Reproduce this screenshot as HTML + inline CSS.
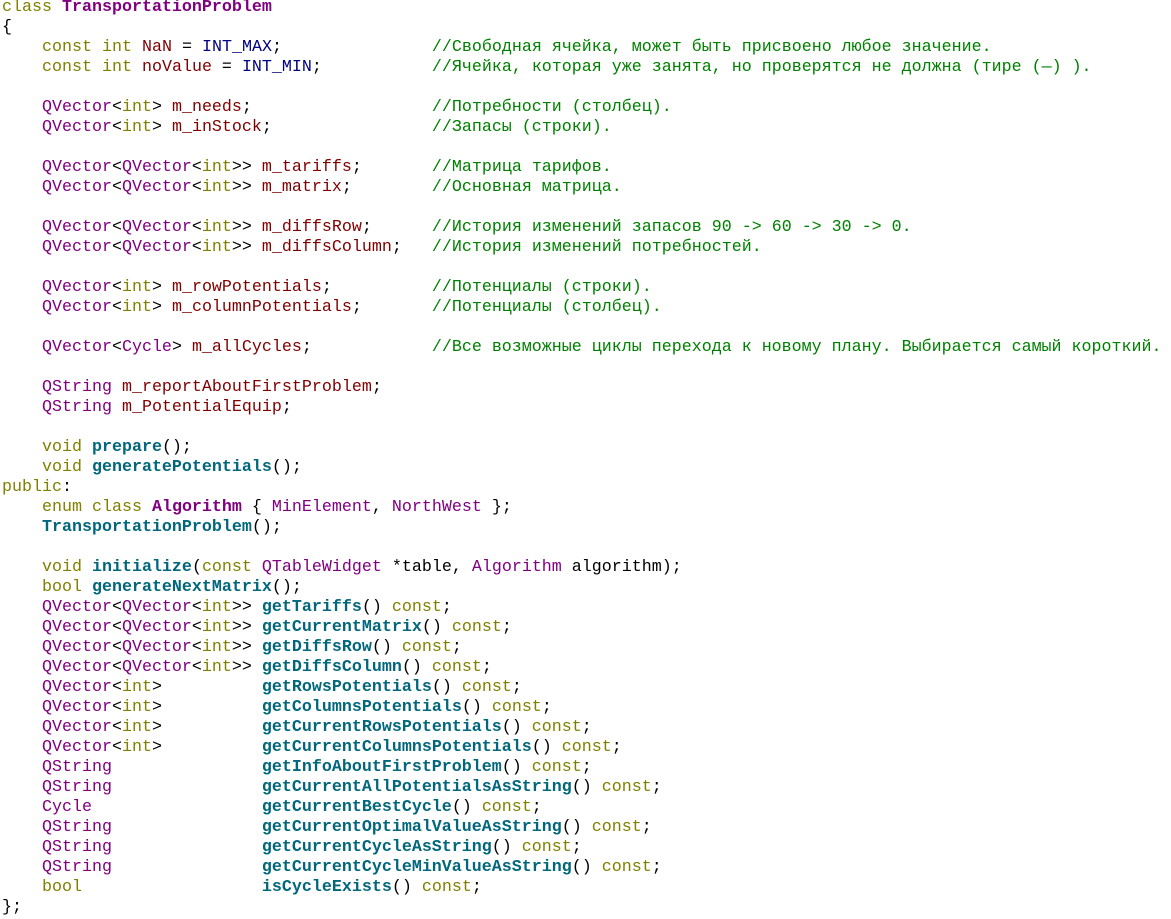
<!DOCTYPE html><html><head><meta charset="utf-8"><style>
body{margin:0;background:#fff;width:1171px;height:919px;overflow:hidden}
pre{margin:0;position:absolute;top:-2px;left:2px;font-family:"Liberation Mono","DejaVu Sans Mono",monospace;font-size:16.67px;line-height:20px;color:#000}
.k{color:#808000}.t{color:#800080}.m{color:#800000}.e{color:#000080}.f{color:#00677c;font-weight:bold}.c{color:#008000}.b{color:#800080;font-weight:bold}
</style></head><body><pre><span class="k">class</span> <span class="b">TransportationProblem</span>
{
    <span class="k">const</span> <span class="k">int</span> <span class="m">NaN</span> = <span class="e">INT_MAX</span>;               <span class="c">//Свободная ячейка, может быть присвоено любое значение.</span>
    <span class="k">const</span> <span class="k">int</span> <span class="m">noValue</span> = <span class="e">INT_MIN</span>;           <span class="c">//Ячейка, которая уже занята, но проверятся не должна (тире (—) ).</span>

    <span class="t">QVector</span>&lt;<span class="k">int</span>&gt; <span class="m">m_needs</span>;                  <span class="c">//Потребности (столбец).</span>
    <span class="t">QVector</span>&lt;<span class="k">int</span>&gt; <span class="m">m_inStock</span>;                <span class="c">//Запасы (строки).</span>

    <span class="t">QVector</span>&lt;<span class="t">QVector</span>&lt;<span class="k">int</span>&gt;&gt; <span class="m">m_tariffs</span>;       <span class="c">//Матрица тарифов.</span>
    <span class="t">QVector</span>&lt;<span class="t">QVector</span>&lt;<span class="k">int</span>&gt;&gt; <span class="m">m_matrix</span>;        <span class="c">//Основная матрица.</span>

    <span class="t">QVector</span>&lt;<span class="t">QVector</span>&lt;<span class="k">int</span>&gt;&gt; <span class="m">m_diffsRow</span>;      <span class="c">//История изменений запасов 90 -&gt; 60 -&gt; 30 -&gt; 0.</span>
    <span class="t">QVector</span>&lt;<span class="t">QVector</span>&lt;<span class="k">int</span>&gt;&gt; <span class="m">m_diffsColumn</span>;   <span class="c">//История изменений потребностей.</span>

    <span class="t">QVector</span>&lt;<span class="k">int</span>&gt; <span class="m">m_rowPotentials</span>;          <span class="c">//Потенциалы (строки).</span>
    <span class="t">QVector</span>&lt;<span class="k">int</span>&gt; <span class="m">m_columnPotentials</span>;       <span class="c">//Потенциалы (столбец).</span>

    <span class="t">QVector</span>&lt;<span class="t">Cycle</span>&gt; <span class="m">m_allCycles</span>;            <span class="c">//Все возможные циклы перехода к новому плану. Выбирается самый короткий.</span>

    <span class="t">QString</span> <span class="m">m_reportAboutFirstProblem</span>;
    <span class="t">QString</span> <span class="m">m_PotentialEquip</span>;

    <span class="k">void</span> <span class="f">prepare</span>();
    <span class="k">void</span> <span class="f">generatePotentials</span>();
<span class="k">public</span>:
    <span class="k">enum</span> <span class="k">class</span> <span class="b">Algorithm</span> { <span class="t">MinElement</span>, <span class="t">NorthWest</span> };
    <span class="f">TransportationProblem</span>();

    <span class="k">void</span> <span class="f">initialize</span>(<span class="k">const</span> <span class="t">QTableWidget</span> *table, <span class="t">Algorithm</span> algorithm);
    <span class="k">bool</span> <span class="f">generateNextMatrix</span>();
    <span class="t">QVector</span>&lt;<span class="t">QVector</span>&lt;<span class="k">int</span>&gt;&gt; <span class="f">getTariffs</span>() <span class="k">const</span>;
    <span class="t">QVector</span>&lt;<span class="t">QVector</span>&lt;<span class="k">int</span>&gt;&gt; <span class="f">getCurrentMatrix</span>() <span class="k">const</span>;
    <span class="t">QVector</span>&lt;<span class="t">QVector</span>&lt;<span class="k">int</span>&gt;&gt; <span class="f">getDiffsRow</span>() <span class="k">const</span>;
    <span class="t">QVector</span>&lt;<span class="t">QVector</span>&lt;<span class="k">int</span>&gt;&gt; <span class="f">getDiffsColumn</span>() <span class="k">const</span>;
    <span class="t">QVector</span>&lt;<span class="k">int</span>&gt;          <span class="f">getRowsPotentials</span>() <span class="k">const</span>;
    <span class="t">QVector</span>&lt;<span class="k">int</span>&gt;          <span class="f">getColumnsPotentials</span>() <span class="k">const</span>;
    <span class="t">QVector</span>&lt;<span class="k">int</span>&gt;          <span class="f">getCurrentRowsPotentials</span>() <span class="k">const</span>;
    <span class="t">QVector</span>&lt;<span class="k">int</span>&gt;          <span class="f">getCurrentColumnsPotentials</span>() <span class="k">const</span>;
    <span class="t">QString</span>               <span class="f">getInfoAboutFirstProblem</span>() <span class="k">const</span>;
    <span class="t">QString</span>               <span class="f">getCurrentAllPotentialsAsString</span>() <span class="k">const</span>;
    <span class="t">Cycle</span>                 <span class="f">getCurrentBestCycle</span>() <span class="k">const</span>;
    <span class="t">QString</span>               <span class="f">getCurrentOptimalValueAsString</span>() <span class="k">const</span>;
    <span class="t">QString</span>               <span class="f">getCurrentCycleAsString</span>() <span class="k">const</span>;
    <span class="t">QString</span>               <span class="f">getCurrentCycleMinValueAsString</span>() <span class="k">const</span>;
    <span class="k">bool</span>                  <span class="f">isCycleExists</span>() <span class="k">const</span>;
};</pre></body></html>
